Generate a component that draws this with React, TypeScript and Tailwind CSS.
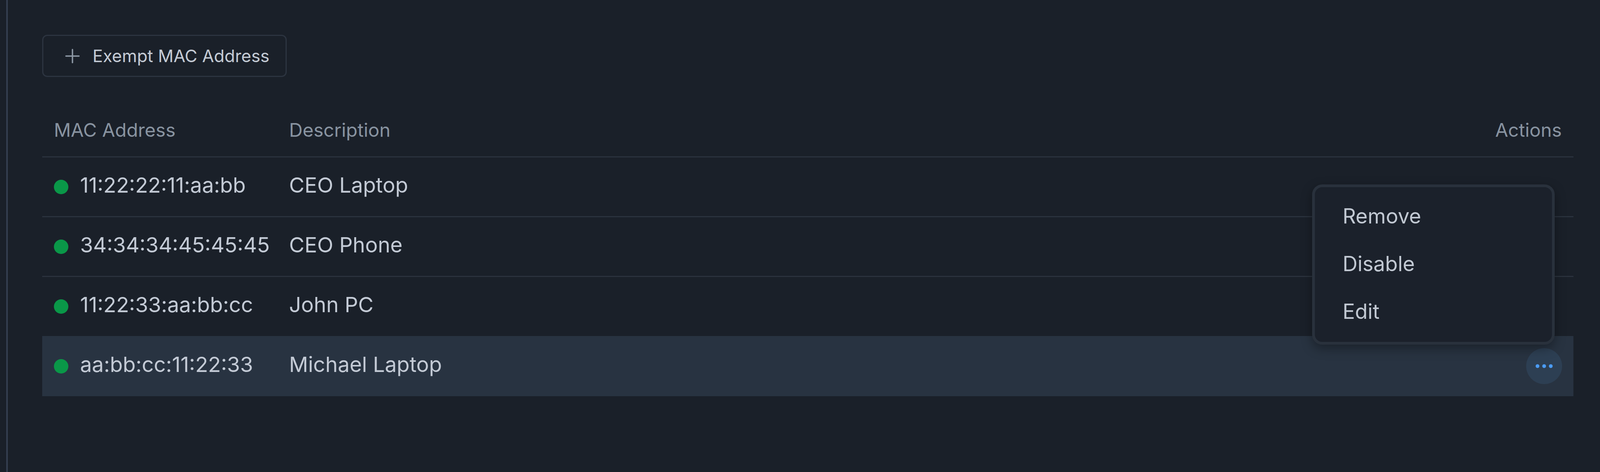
import React from 'react';
import { Plus } from 'lucide-react';

const rows = [
  { mac: '11:22:22:11:aa:bb', desc: 'CEO Laptop' },
  { mac: '34:34:34:45:45:45', desc: 'CEO Phone' },
  { mac: '11:22:33:aa:bb:cc', desc: 'John PC' },
  { mac: 'aa:bb:cc:11:22:33', desc: 'Michael Laptop', active: true },
];

const menuItems = ['Remove', 'Disable', 'Edit'];

const rowClass = [
  'h-[153px] flex items-center px-[30px] border-b-[3px] border-[#2a323d] text-[54px] text-[#c3cad5]',
  'h-[153px] flex items-center px-[30px] border-b-[3px] border-[#2a323d] text-[54px] text-[#c3cad5]',
  'h-[151px] flex items-center px-[30px] text-[54px] text-[#c3cad5]',
  'h-[154px] flex items-center px-[30px] bg-[#283341] text-[54px] text-[#c3cad5]',
];

const Dots: React.FC = () => (
  <svg width="58" height="58" viewBox="0 0 58 58" fill="#4b9cf5">
    <circle cx="12" cy="29" r="4.8" />
    <circle cx="29" cy="29" r="4.8" />
    <circle cx="46" cy="29" r="4.8" />
  </svg>
);

export default function App() {
  return (
    <div
      className="w-full min-h-screen bg-[#1a2029] flex overflow-hidden"
      style={{ fontFamily: 'Inter, "Noto Sans", sans-serif' }}
    >
      <div className="w-[16px] shrink-0 border-r-[4px] border-[#343e50] box-content" />

      <div className="flex-1 min-w-0 pl-[88px] pr-[68px] pt-[89px] pb-[80px]">
        <button className="h-[108px] flex items-center gap-[23px] pl-[46px] pr-[41px] rounded-[13px] border-[3px] border-[#2c3440] bg-[#1a2029] text-[#c4cbd5] text-[44px] leading-none">
          <Plus size={57} strokeWidth={1.5} className="text-[#8d98a5]" />
          <span>Exempt MAC Address</span>
        </button>

        <div className="relative mt-[68px]">
          <div className="h-[138px] flex items-center px-[30px] border-b-[3px] border-[#2a323d] text-[48px] text-[#8893a0]">
            <div className="w-[602px] shrink-0">MAC Address</div>
            <div className="flex-1">Description</div>
            <div>Actions</div>
          </div>

          {rows.map((row, i) => (
            <div key={row.mac} className={rowClass[i]}>
              <div className="w-[602px] shrink-0 flex items-center gap-[30px]">
                <span className="w-[37px] h-[37px] rounded-full bg-[#0a9748] shrink-0" />
                <span className="-translate-y-[5px]">{row.mac}</span>
              </div>
              <div className="flex-1 -translate-y-[5px]">{row.desc}</div>
              {row.active && (
                <div className="w-[92px] h-[92px] rounded-full bg-[#2d3f53] flex items-center justify-center -mr-[1px]">
                  <Dots />
                </div>
              )}
            </div>
          ))}

          <div className="absolute right-[48px] top-[207px] w-[621px] h-[410px] rounded-[26px] border-[7px] border-[#29313c] bg-[#1b212b] py-[14px] shadow-[0_10px_28px_rgba(0,0,0,0.35)]">
            {menuItems.map((item) => (
              <div key={item} className="h-[122px] flex items-center px-[71px] text-[53px] text-[#c1c8d2]">
                {item}
              </div>
            ))}
          </div>
        </div>
      </div>
    </div>
  );
}
